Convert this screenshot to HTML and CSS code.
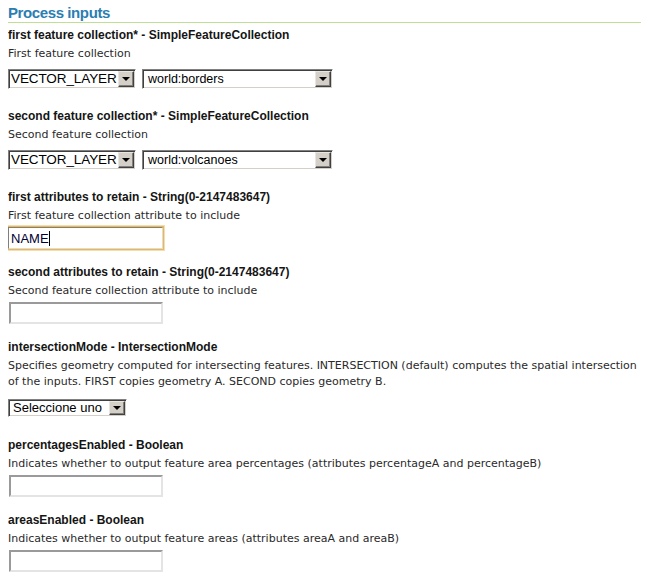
FILE: index.html
```html
<!DOCTYPE html>
<html>
<head>
<meta charset="utf-8">
<link rel="stylesheet" href="styles.css">
</head>
<body>
<h2 class="title">Process inputs</h2>

<div class="field">
  <div class="field-label">first feature collection* - SimpleFeatureCollection</div>
  <div class="field-desc">First feature collection</div>
  <div class="row row-select">
    <span class="select select-type"><span class="select-value">VECTOR_LAYER</span><span class="arrow"></span></span>
    <span class="select select-layer"><span class="select-value">world:borders</span><span class="arrow"></span></span>
  </div>
</div>

<div class="field">
  <div class="field-label">second feature collection* - SimpleFeatureCollection</div>
  <div class="field-desc">Second feature collection</div>
  <div class="row row-select">
    <span class="select select-type"><span class="select-value">VECTOR_LAYER</span><span class="arrow"></span></span>
    <span class="select select-layer"><span class="select-value">world:volcanoes</span><span class="arrow"></span></span>
  </div>
</div>

<div class="field">
  <div class="field-label">first attributes to retain - String(0-2147483647)</div>
  <div class="field-desc">First feature collection attribute to include</div>
  <div class="row row-input">
    <span class="text-input focused">NAME<span class="caret"></span></span>
  </div>
</div>

<div class="field">
  <div class="field-label">second attributes to retain - String(0-2147483647)</div>
  <div class="field-desc">Second feature collection attribute to include</div>
  <div class="row row-input">
    <span class="text-input"></span>
  </div>
</div>

<div class="field">
  <div class="field-label">intersectionMode - IntersectionMode</div>
  <div class="field-desc">Specifies geometry computed for intersecting features. INTERSECTION (default) computes the spatial intersection of the inputs. FIRST copies geometry A. SECOND copies geometry B.</div>
  <div class="row row-select-sm">
    <span class="select select-mode"><span class="select-value">Seleccione uno</span><span class="arrow"></span></span>
  </div>
</div>

<div class="field">
  <div class="field-label">percentagesEnabled - Boolean</div>
  <div class="field-desc">Indicates whether to output feature area percentages (attributes percentageA and percentageB)</div>
  <div class="row row-input">
    <span class="text-input"></span>
  </div>
</div>

<div class="field">
  <div class="field-label">areasEnabled - Boolean</div>
  <div class="field-desc">Indicates whether to output feature areas (attributes areaA and areaB)</div>
  <div class="row row-input">
    <span class="text-input"></span>
  </div>
</div>
</body>
</html>
```

FILE: styles.css
```css
html, body {
  background: #ffffff;
}
body {
  margin: 0 5px 0 8px;
  font-family: "Liberation Sans", Arial, sans-serif;
  font-size: 12px;
  color: #222222;
}
.title {
  margin: 0;
  padding-top: 4px;
  font-size: 15px;
  line-height: 18px;
  font-weight: bold;
  letter-spacing: -0.4px;
  color: #2b7eb1;
  border-bottom: 1px solid #bfe094;
}
.field:first-of-type {
  margin-top: 4px;
}
.field-label {
  font-weight: bold;
  line-height: 16px;
  margin-bottom: 3px;
  color: #151515;
}
.field-desc {
  font-family: "DejaVu Sans", Verdana, sans-serif;
  font-size: 11px;
  line-height: 16px;
  color: #2a2a2a;
}
.row {
  display: flex;
  gap: 6px;
}
.row-select {
  margin-top: 7px;
  margin-bottom: 19px;
}
.row-select-sm {
  margin-top: 9px;
  margin-bottom: 20px;
}
.row-input {
  margin-top: 3px;
  margin-bottom: 15px;
}

/* classic select */
.select {
  display: inline-flex;
  align-items: center;
  box-sizing: border-box;
  height: 20px;
  border: 1px solid;
  border-color: #808080 #ffffff #ffffff #808080;
  box-shadow: inset 1px 1px 0 #404040, inset -1px -1px 0 #d4d0c8;
  background: #ffffff;
  padding: 2px 1px 2px 2px;
  color: #000000;
  font-family: "Liberation Sans", Arial, sans-serif;
}
.select-value {
  flex: 1;
  min-width: 0;
  overflow: hidden;
  white-space: nowrap;
  line-height: 16px;
}
.select-type { width: 128px; }
.select-type .select-value { font-size: 13.5px; letter-spacing: -0.1px; }
.select-layer { width: 191px; }
.select-layer .select-value { font-size: 12.5px; padding-left: 3px; }
.select-mode { width: 119px; height: 18px; padding: 1px 1px 1px 2px; }
.select-mode .select-value { font-size: 13px; padding-left: 2px; }
.arrow {
  flex: none;
  position: relative;
  box-sizing: border-box;
  width: 16px;
  height: 16px;
  background: #d4d0c8;
  border: 1px solid;
  border-color: #e8e6e0 #404040 #404040 #e8e6e0;
  box-shadow: inset -1px -1px 0 #808080;
}
.select-mode .arrow { height: 14px; }
.arrow::after {
  content: "";
  position: absolute;
  left: 3px;
  top: 5px;
  border-left: 4px solid transparent;
  border-right: 4px solid transparent;
  border-top: 4px solid #000000;
}
.select-mode .arrow::after { top: 4px; }

/* text inputs */
.text-input {
  display: inline-flex;
  align-items: center;
  box-sizing: border-box;
  width: 154px;
  height: 22px;
  margin-left: 1px;
  border: 2px solid;
  border-color: #9a9a9a #e4e4e4 #e4e4e4 #9a9a9a;
  background: #ffffff;
  font-family: "Liberation Sans", Arial, sans-serif;
  font-size: 13px;
  color: #000033;
  padding-left: 1px;
}
.text-input.focused {
  margin-left: 0;
  width: 155px;
  border-width: 1px;
  border-color: #7f7f7f #dcdcdc #dcdcdc #7f7f7f;
  box-shadow: 0 0 0 1px #e9b755, 0 0 0 2px #f6deaa;
  padding-left: 2px;
}
.caret {
  display: inline-block;
  width: 1px;
  height: 15px;
  background: #000000;
}
```
